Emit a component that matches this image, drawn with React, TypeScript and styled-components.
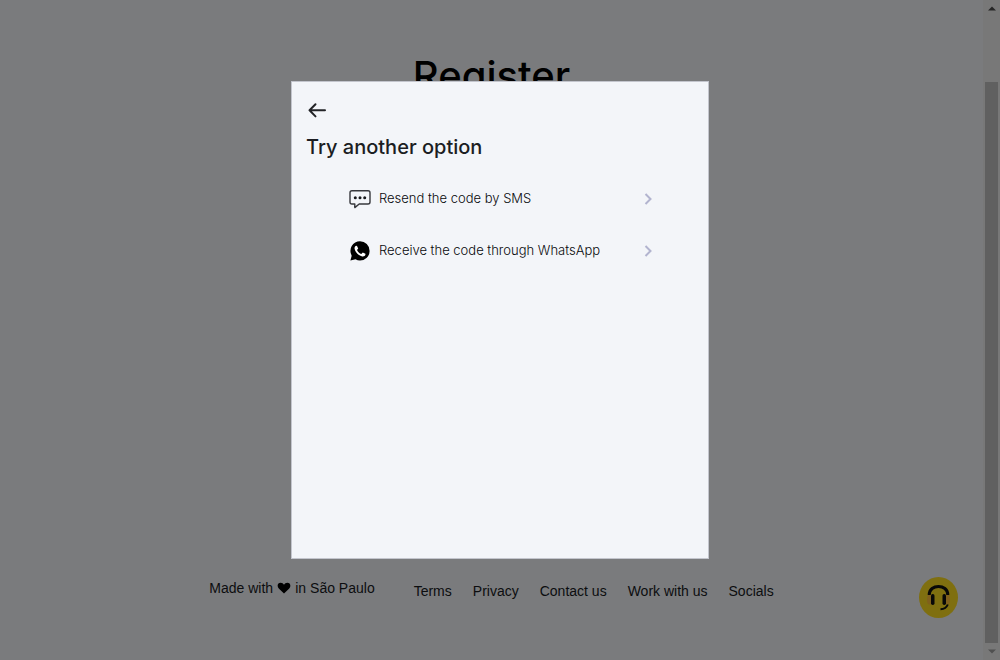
import React from "react";
import styled, { createGlobalStyle } from "styled-components";

const GlobalStyle = createGlobalStyle`
  *, *::before, *::after { box-sizing: border-box; }
  body {
    margin: 0;
    background: #7a7b7d;
    color: #0c0d0f;
    font-family: "Liberation Sans", Arial, sans-serif;
    font-size: 14px;
  }
`;

const Page = styled.div`
  display: flex;
  min-height: 100vh;
`;

const Content = styled.div`
  flex: 1;
  display: flex;
  flex-direction: column;
  justify-content: space-between;
`;

const PageTitle = styled.h1`
  margin: 0;
  padding-top: 52px;
  text-align: center;
  color: #000;
  font: 500 40px/48px Inter, sans-serif;
`;

const Footer = styled.footer`
  display: flex;
  justify-content: center;
  gap: 39px;
  padding-bottom: 59px;
  line-height: 20px;
`;

const MadeIn = styled.p`
  display: flex;
  align-items: center;
  align-self: flex-start;
  gap: 4px;
  margin: 0;
`;

const FooterNav = styled.nav`
  display: flex;
  gap: 21px;
  padding-top: 3px;
`;

const FooterLink = styled.a`
  color: inherit;
  text-decoration: none;
`;

const Scrollbar = styled.div`
  width: 17px;
  display: flex;
  flex-direction: column;
  align-items: center;
  gap: 6px;
  padding: 6px 0;
  background: #787878;
`;

const Thumb = styled.div`
  flex: 1;
  width: 13px;
  margin-top: 65px;
  background: #606060;
`;

const SupportButton = styled.button`
  position: fixed;
  right: 42px;
  bottom: 42px;
  width: 39px;
  height: 41px;
  padding: 0;
  border: 0;
  border-radius: 50%;
  background: #7f6f10;
  line-height: 0;
  cursor: pointer;
`;

const Overlay = styled.div`
  position: fixed;
  inset: 0;
  display: flex;
  justify-content: center;
  align-items: center;
  padding: 0 16px 20px;
  pointer-events: none;
`;

const Dialog = styled.section`
  width: 100%;
  max-width: 418px;
  min-height: 478px;
  padding: 18px 14px;
  border: 1px solid #c3c5cd;
  background: #f3f5f9;
  font-family: Inter, sans-serif;
  pointer-events: auto;
`;

const BackButton = styled.button`
  display: block;
  padding: 0 1px;
  border: 0;
  background: none;
  line-height: 0;
  cursor: pointer;
`;

const DialogTitle = styled.h2`
  margin: 13px 0 26px;
  color: #1b1d22;
  font-size: 20px;
  line-height: 28px;
  font-weight: 500;
`;

const Options = styled.div`
  display: flex;
  flex-direction: column;
  gap: 28px;
  padding: 0 40px 0 42px;
`;

const Option = styled.button`
  display: flex;
  align-items: center;
  gap: 7px;
  height: 24px;
  padding: 0;
  border: 0;
  background: none;
  color: #08090c;
  font: 300 13px/24px Inter, sans-serif;
  text-align: left;
  cursor: pointer;
`;

const OptionLabel = styled.span`
  flex: 1;
  padding-bottom: 3px;
`;

const ArrowLeft = () => (
  <svg width="20" height="20" viewBox="0 0 20 20" fill="none" stroke="#222327" strokeWidth="2" strokeLinecap="round" strokeLinejoin="round">
    <path d="M18 10.3H2.5M8.5 4.2L2.5 10.3L8.5 16.4" />
  </svg>
);

const SmsIcon = () => (
  <svg width="24" height="24" viewBox="0 0 24 24" fill="none">
    <path d="M4 3.7H20Q22 3.7 22 5.7V15Q22 17 20 17H11.2L6.8 20.6V17H4Q2 17 2 15V5.7Q2 3.7 4 3.7Z" stroke="#37383d" strokeWidth="1.4" strokeLinejoin="round" />
    <g fill="#18191c">
      <circle cx="7.3" cy="10.8" r="1.5" />
      <circle cx="12" cy="10.8" r="1.5" />
      <circle cx="16.7" cy="10.8" r="1.5" />
    </g>
  </svg>
);

const WhatsAppIcon = () => (
  <svg width="24" height="24" viewBox="0 0 24 24">
    <path d="M12 2.3A9.6 9.6 0 0 1 12 21.5C10.400 21.500 8.800 21.100 7.500 20.300L2.400 21.600L3.700 16.700A9.600 9.600 0 0 1 12 2.300Z" fill="#000" />
    <path d="M8.300 6.700C7.200 6.900 6.300 8.300 6.600 9.800C7.200 13.200 10.800 16.800 14.200 17.400C15.700 17.700 17.300 16.900 17.500 15.500L17.400 14.800L14.800 13.500L13.300 15.100C11.600 14.500 9.700 12.700 9 10.900L10.200 9.500L9 6.900Z" fill="#fff" />
  </svg>
);

const Chevron = () => (
  <svg width="12" height="12" viewBox="0 0 12 12" fill="none" stroke="#b2b4cf" strokeWidth="2">
    <path d="M3.500 1L8.500 6L3.500 11" />
  </svg>
);

const Heart = () => (
  <svg width="14" height="12" viewBox="0 0 14 12" fill="#000">
    <path d="M7 11.500L2 6.800C-.5 4.200 .7 .8 3.600 .8C5.200 .8 6.300 1.700 7 2.800C7.700 1.700 8.800 .8 10.400 .8C13.300 .8 14.500 4.200 12 6.800Z" />
  </svg>
);

const Headset = () => (
  <svg width="39" height="41" viewBox="0 0 39 41" fill="none">
    <path d="M12 17.500H10Q8 18 8 22.500Q8 27 10 27.500H12ZM27 17.500H29Q31 18 31 22.500Q31 27 29 27.500H27Z" fill="#80601d" />
    <path d="M10.200 18C10.200 6.500 28.800 6.500 28.800 18" stroke="#080808" strokeWidth="3" />
    <rect x="12" y="17" width="3.500" height="11" rx="1.700" fill="#080808" />
    <rect x="23.500" y="17" width="3.500" height="11" rx="1.700" fill="#080808" />
    <path d="M28.800 27.500Q27 32 21.500 32.300" stroke="#080808" strokeWidth="2" />
  </svg>
);

const Triangle = ({ down = false }: { down?: boolean }) => (
  <svg width="8" height="5" viewBox="0 0 8 5" fill={down ? "#505050" : "#252525"}>
    <path d={down ? "M0 .5H8L4 4.5Z" : "M0 4.5H8L4 .5Z"} />
  </svg>
);

const links = ["Terms", "Privacy", "Contact us", "Work with us", "Socials"];

export default function App() {
  return (
    <>
      <GlobalStyle />
      <Page>
        <Content>
          <PageTitle>Register</PageTitle>
          <Footer>
            <MadeIn>
              <span>Made with</span>
              <Heart />
              <span>in</span>
              <span>São Paulo</span>
            </MadeIn>
            <FooterNav>
              {links.map((label) => (
                <FooterLink key={label} href="#">{label}</FooterLink>
              ))}
            </FooterNav>
          </Footer>
        </Content>
        <Scrollbar aria-hidden="true">
          <Triangle />
          <Thumb />
          <Triangle down />
        </Scrollbar>
      </Page>
      <SupportButton type="button" aria-label="Support">
        <Headset />
      </SupportButton>
      <Overlay>
        <Dialog role="dialog" aria-modal="true" aria-labelledby="dialog-title">
          <BackButton type="button" aria-label="Back">
            <ArrowLeft />
          </BackButton>
          <DialogTitle id="dialog-title">Try another option</DialogTitle>
          <Options>
            <Option type="button">
              <SmsIcon />
              <OptionLabel>Resend the code by SMS</OptionLabel>
              <Chevron />
            </Option>
            <Option type="button">
              <WhatsAppIcon />
              <OptionLabel>Receive the code through WhatsApp</OptionLabel>
              <Chevron />
            </Option>
          </Options>
        </Dialog>
      </Overlay>
    </>
  );
}
